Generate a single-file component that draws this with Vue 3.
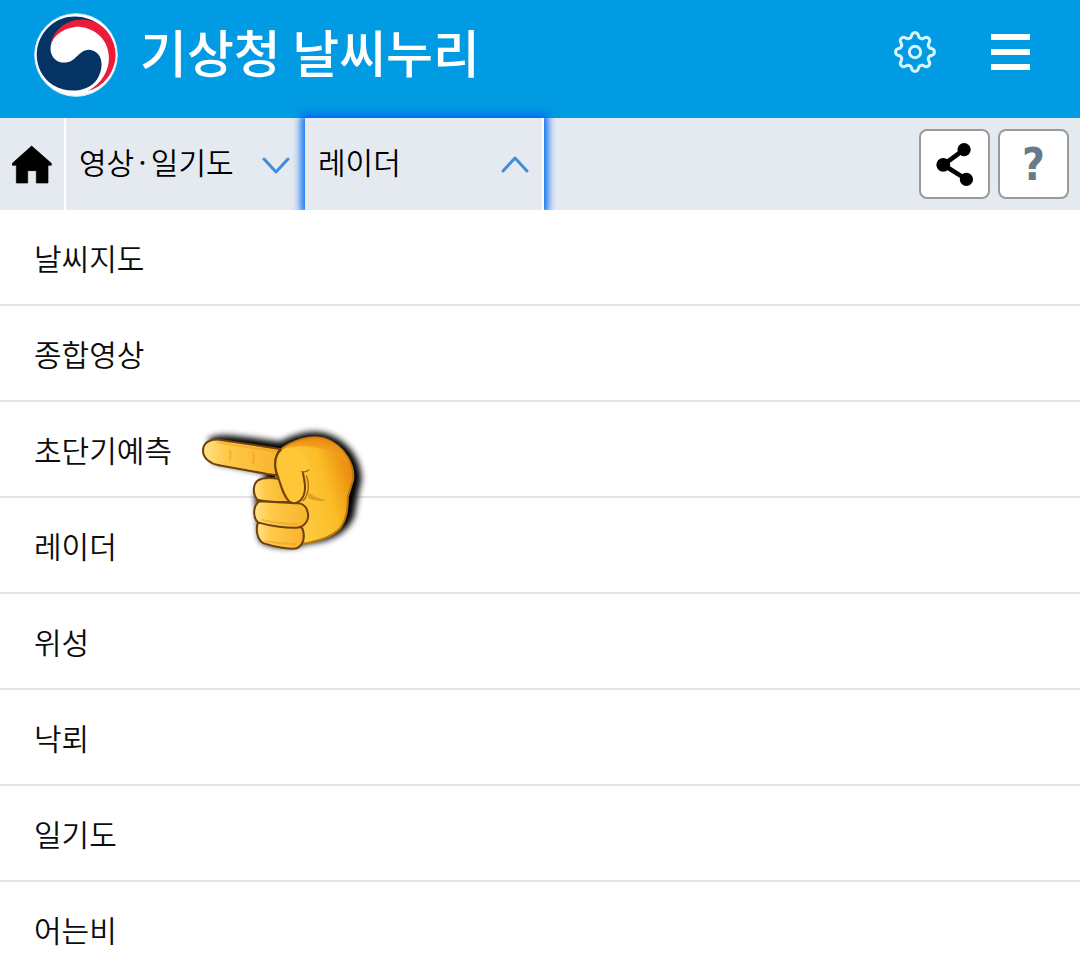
<script setup>
const items = ['날씨지도', '종합영상', '초단기예측', '레이더', '위성', '낙뢰', '일기도', '어는비']

const gearPoints = Array.from({ length: 160 }, (_, i) => {
  const t = (i / 160) * Math.PI * 2
  const r = 51 + (7 * Math.tanh(1.4 * Math.cos(8 * t))) / Math.tanh(1.4)
  return `${(66 + r * Math.cos(t)).toFixed(1)},${(66 + r * Math.sin(t)).toFixed(1)}`
}).join(' ')
</script>

<template>
  <div class="page">
    <header class="header">
      <a class="brand" href="#">
        <svg class="logo" viewBox="41 38 254 254" aria-hidden="true">
          <circle cx="168" cy="165" r="125" fill="#fff" stroke="#c5ecff" stroke-width="3" />
          <path fill="#053464" d="M245 78C200 40 130 38 88 78C32 128 38 217 98 256C145 284 206 276 232 238C256 198 248 153 207 149C174 150 168 188 133 188C105 188 86 165 92 135C98 85 170 45 245 78Z" />
          <path fill="#ec1c38" d="M92 136C97 80 162 42 222 64C270 84 297 140 285 188C273 240 235 266 205 274C250 248 271 206 267 165C262 110 215 78 165 80C125 85 98 108 92 136Z" />
        </svg>
        <h1 class="title">기상청 날씨누리</h1>
      </a>
      <div class="header-actions">
        <button class="plain" type="button" aria-label="설정">
          <svg class="gear" viewBox="0 0 132 132">
            <g fill="none" stroke="#d9f6ff" stroke-width="9" stroke-linejoin="round">
              <polygon :points="gearPoints" />
              <circle cx="66" cy="66" r="17" />
            </g>
          </svg>
        </button>
        <button class="plain menu" type="button" aria-label="메뉴">
          <i></i><i></i><i></i>
        </button>
      </div>
    </header>

    <nav class="tabs">
      <a class="home" href="#" aria-label="홈">
        <svg viewBox="35 101 120 117">
          <path d="M94 104L153 156V162H143V215H108V180Q108 178 105 178H85Q82 178 82 180V215H48V162H36V156Z" stroke="#000" stroke-width="2" stroke-linejoin="round" />
        </svg>
      </a>
      <button class="tab" type="button" aria-expanded="false">
        <span>영상·일기도</span>
        <svg class="chevron down" viewBox="0 0 28 18"><path d="M2 2L14 15L26 2" /></svg>
      </button>
      <button class="tab active" type="button" aria-expanded="true">
        <span>레이더</span>
        <svg class="chevron" viewBox="0 0 28 18"><path d="M2 16L14 3L26 16" /></svg>
      </button>
      <div class="tools">
        <button class="tool" type="button" aria-label="공유">
          <svg class="share" viewBox="110 97 110 130">
            <path d="M194 117L131 163L201 207" fill="none" stroke="#000" stroke-width="14" />
            <circle cx="194" cy="117" r="20" /><circle cx="131" cy="163" r="21" /><circle cx="201" cy="207" r="20" />
          </svg>
        </button>
        <button class="tool help" type="button" aria-label="도움말">?</button>
      </div>
    </nav>

    <main class="content">
      <ul class="list">
        <li v-for="item in items" :key="item"><a href="#">{{ item }}</a></li>
      </ul>
      <svg class="hand" viewBox="0 0 600 480" aria-hidden="true">
        <defs>
          <linearGradient id="palm" x1="0" y1="0.7" x2="1" y2="0.3">
            <stop offset="0" stop-color="#ffd352" />
            <stop offset="0.65" stop-color="#fbbd27" />
            <stop offset="1" stop-color="#e8860c" />
          </linearGradient>
          <linearGradient id="finger" x1="0" y1="0" x2="1" y2="0">
            <stop offset="0" stop-color="#ffe28a" />
            <stop offset="0.3" stop-color="#ffca48" />
            <stop offset="1" stop-color="#f9b32c" />
          </linearGradient>
          <linearGradient id="top" x1="0" y1="0" x2="0" y2="1">
            <stop offset="0" stop-color="#e67e0c" stop-opacity="0.9" />
            <stop offset="1" stop-color="#ffbf30" stop-opacity="0" />
          </linearGradient>
          <filter id="blur" x="-20%" y="-20%" width="140%" height="140%"><feGaussianBlur stdDeviation="9" /></filter>
        </defs>
        <path filter="url(#blur)" fill="#000" d="M85 88C110 68 170 76 300 96C345 72 400 55 448 74C515 98 550 165 543 218C534 245 530 280 522 322C495 375 450 397 370 402C360 420 250 415 238 390L225 250L262 190L100 158Z" />
        <g stroke="#70410b" stroke-width="6" stroke-linejoin="round" stroke-linecap="round">
          <path fill="url(#palm)" stroke="#b77711" d="M300 120C335 94 390 72 435 86C495 108 526 167 519 211C512 235 508 245 504 260C503 305 498 330 481 354C452 384 410 394 373 401L290 290L286 145Z" />
          <path fill="url(#finger)" d="M69 122C69 98 90 87 117 89L300 117C282 140 285 174 290 196L262 192L117 166C90 161 69 144 69 122Z" />
          <path fill="url(#finger)" d="M299 207C274 203 248 202 233 212C218 223 218 253 232 269C263 278 315 276 331 276C325 252 314 228 299 207Z" />
          <path fill="url(#finger)" d="M234 338C227 355 230 391 252 400C285 411 333 419 350 415C372 405 376 377 367 355L342 340Z" />
          <path fill="url(#finger)" d="M239 274C219 285 217 321 234 337C273 349 323 355 352 353C377 348 389 328 383 306C379 287 364 279 349 280Z" />
          <path fill="#ffc638" d="M300 122C285 140 286 172 294 200C304 232 311 258 328 275C347 287 369 273 374 245C378 222 371 207 369 188C382 182 388 179 386 185C400 130 340 107 300 122Z" stroke="none" />
          <path fill="none" d="M303 119C281 140 283 172 294 200C304 232 311 258 328 275C347 287 369 273 374 245C378 222 371 207 369 188" />
        </g>
        <path fill="url(#top)" d="M300 120C335 94 390 72 435 86C480 101 507 138 515 175C470 115 371 94 300 120Z" />
        <path fill="none" stroke="#a76510" stroke-width="4" stroke-linecap="round" d="M365 185Q376 188 386 180M379 198Q389 222 383 246Q378 265 369 272" />
        <path fill="#c27c12" opacity="0.5" d="M387 248Q407 264 440 271Q407 277 384 264Z" />
        <g fill="none" stroke="#e99116" opacity="0.4" stroke-width="6" stroke-linecap="round">
          <path d="M150 119Q154 137 149 151M220 129Q224 145 219 160" />
          <path d="M112 97L284 124M256 393Q300 403 346 402M248 330Q298 342 350 342" />
        </g>
      </svg>
    </main>
  </div>
</template>

<style>
body {
  margin: 0;
  background: #fff;
}
</style>

<style scoped>
.page {
  font-family: "Noto Sans CJK KR", sans-serif;
  color: #0c0c0c;
}
button {
  font: inherit;
  color: inherit;
  cursor: pointer;
}
a {
  color: inherit;
  text-decoration: none;
}
svg {
  display: block;
}
.header {
  display: flex;
  align-items: center;
  justify-content: space-between;
  height: 118px;
  padding: 0 50px 0 34px;
  box-sizing: border-box;
  background: #009be3;
}
.brand {
  display: flex;
  align-items: center;
  gap: 22px;
}
.logo {
  width: 84px;
  height: 84px;
  margin-bottom: 8px;
}
.title {
  margin: 0;
  padding-bottom: 16px;
  color: #fff;
  font-size: 51px;
  font-weight: 500;
  line-height: 80px;
}
.header-actions {
  display: flex;
  align-items: center;
  gap: 54px;
  padding-bottom: 14px;
}
.plain {
  padding: 0;
  border: 0;
  background: none;
}
.gear {
  width: 44px;
  height: 44px;
}
.menu {
  display: grid;
  gap: 9px;
  width: 39px;
}
.menu i {
  height: 6px;
  background: #fff;
}
.tabs {
  display: flex;
  height: 92px;
  background: #e5eaf1;
}
.home {
  display: flex;
  align-items: center;
  justify-content: center;
  width: 64px;
  border-right: 2px solid #fff;
}
.home svg {
  width: 40px;
  height: 39px;
}
.tab {
  display: flex;
  align-items: center;
  justify-content: space-between;
  width: 239px;
  box-sizing: border-box;
  padding: 0 13px;
  border: 0;
  border-right: 2px solid #fff;
  background: #e5eaf1;
  font-size: 30px;
  font-weight: 350;
  color: #000;
}
.tab span {
  padding-bottom: 6px;
}
.tab.active {
  position: relative;
  box-shadow: 0 0 8px 4px #0068ef;
}
.chevron {
  width: 28px;
  height: 18px;
  fill: none;
  stroke: #3f8ed8;
  stroke-width: 3;
  stroke-linecap: round;
  stroke-linejoin: round;
}
.down {
  margin-top: 4px;
}
.tools {
  display: flex;
  align-items: center;
  gap: 8px;
  margin-left: auto;
  padding-right: 11px;
}
.tool {
  display: flex;
  align-items: center;
  justify-content: center;
  width: 71px;
  height: 70px;
  padding: 0;
  border: 2px solid #989a9d;
  border-radius: 8px;
  background: #fff;
}
.share {
  width: 37px;
  height: 43px;
}
.help {
  color: #667b8b;
  font-family: "DejaVu Sans Condensed", "DejaVu Sans", sans-serif;
  font-size: 44px;
  font-weight: 700;
}
.content {
  position: relative;
  background: #fff;
}
.list {
  margin: 0;
  padding: 0;
  list-style: none;
}
.list li {
  border-bottom: 2px solid #e5e5e5;
}
.list a {
  display: block;
  padding: 24px 34px;
  font-size: 30px;
  font-weight: 350;
  line-height: 46px;
}
.list li:last-child {
  border-bottom: 0;
}
.list li:last-child a {
  padding-bottom: 16px;
}
.hand {
  position: absolute;
  top: 200px;
  left: 180px;
  width: 200px;
  height: 160px;
}
</style>
